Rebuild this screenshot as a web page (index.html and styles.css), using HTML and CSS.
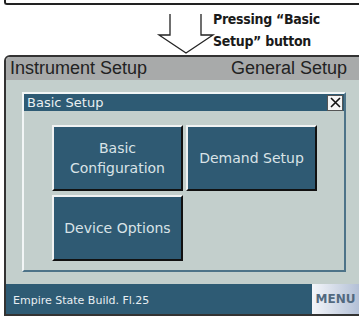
FILE: index.html
```html
<html>

<head>
    <title>Instrument Setup</title>
    <link rel="stylesheet" href="styles.css">
</head>

<body>
    <div class="prev-screen"></div>

    <div class="cue">
        <svg class="cue-arrow" width="58" height="50" viewBox="0 0 58 50">
            <path d="M13 9 V30 H2 L29 48 L56 30 H44 V9" fill="none" stroke="#222" stroke-width="1.3" />
        </svg>
        <div class="cue-label">Pressing “Basic<br>Setup” button</div>
    </div>

    <div class="screen">
        <div class="screen-header">
            <span>Instrument Setup</span>
            <span>General Setup</span>
        </div>

        <div class="screen-body">
            <div class="dialog">
                <div class="dialog-title">
                    <span>Basic Setup</span>
                    <span class="dialog-close">
                        <svg width="11" height="11" viewBox="0 0 11 11">
                            <path d="M1 1 L10 10 M10 1 L1 10" stroke="#111" stroke-width="1.6" />
                        </svg>
                    </span>
                </div>
                <div class="dialog-buttons">
                    <button class="setup-btn">Basic<br>Configuration</button>
                    <button class="setup-btn">Demand Setup</button>
                    <button class="setup-btn">Device Options</button>
                </div>
            </div>
        </div>

        <div class="screen-footer">
            <span class="location">Empire State Build. Fl.25</span>
            <span class="menu-btn">MENU</span>
        </div>
    </div>
</body>

</html>
```

FILE: styles.css
```css
body {
    margin: 0;
    width: 359px;
    height: 320px;
    overflow: hidden;
    background-color: #ffffff;
    font-family: "Liberation Sans", Arial, sans-serif;
}

.prev-screen {
    margin-left: 4px;
    height: 3px;
    border-left: 2px solid #222;
    border-bottom: 2px solid #222;
    border-bottom-left-radius: 3px;
}

.cue {
    display: flex;
    height: 50px;
    padding-left: 157px;
}

.cue-arrow {
    flex: none;
    overflow: visible;
}

.cue-label {
    margin-left: -2px;
    padding-top: 3px;
    font-family: "DejaVu Sans Condensed", "DejaVu Sans", sans-serif;
    font-stretch: condensed;
    font-weight: bold;
    font-size: 14px;
    line-height: 22px;
    letter-spacing: -0.3px;
    color: #1a1a1a;
}

.screen {
    margin-left: 4px;
    width: 353px;
    border: 2px solid #333;
    border-top-left-radius: 6px;
    overflow: hidden;
}

.screen-header {
    display: flex;
    justify-content: space-between;
    align-items: center;
    height: 23px;
    padding: 0 12px 0 4px;
    background-color: #a8aaaa;
    font-size: 18px;
    color: #222;
}

.screen-body {
    padding: 12px 0 12px 16px;
    background-color: #c3cfcc;
}

.dialog {
    width: 320px;
    height: 176px;
    border: 2px solid;
    border-color: #f2f6f6 #4d7388 #4d7388 #f2f6f6;
}

.dialog-title {
    display: flex;
    justify-content: space-between;
    align-items: center;
    height: 17px;
    padding-left: 3px;
    background-color: #2e5b74;
    font-family: "DejaVu Sans", sans-serif;
    font-size: 13px;
    color: #e9eff1;
}

.dialog-close {
    display: flex;
    align-items: center;
    justify-content: center;
    width: 14px;
    height: 14px;
    margin-right: 1px;
    background-color: #f4f4f4;
    border: 1px solid #555;
}

.dialog-buttons {
    display: grid;
    grid-template-columns: 131px 131px;
    grid-auto-rows: 66px;
    column-gap: 3px;
    row-gap: 4px;
    padding: 14px 0 0 28px;
}

.setup-btn {
    border: 2px solid;
    border-color: #f0f2f2 #111 #111 #f0f2f2;
    background-color: #2f5a73;
    color: #d9e3e7;
    font-family: "DejaVu Sans", sans-serif;
    font-size: 14px;
    line-height: 20px;
    padding: 0;
}

.screen-footer {
    display: flex;
    justify-content: space-between;
    align-items: stretch;
    height: 30px;
    background-color: #2e5b74;
}

.location {
    display: flex;
    align-items: center;
    padding: 3px 0 0 7px;
    font-family: "DejaVu Sans", sans-serif;
    font-size: 11px;
    color: #e8eef2;
}

.menu-btn {
    display: flex;
    align-items: center;
    justify-content: center;
    width: 47px;
    background: linear-gradient(to right, #f4f6fa, #b3c0d6);
    font-family: "DejaVu Sans", sans-serif;
    font-weight: bold;
    font-size: 12px;
    color: #52697f;
}
```
